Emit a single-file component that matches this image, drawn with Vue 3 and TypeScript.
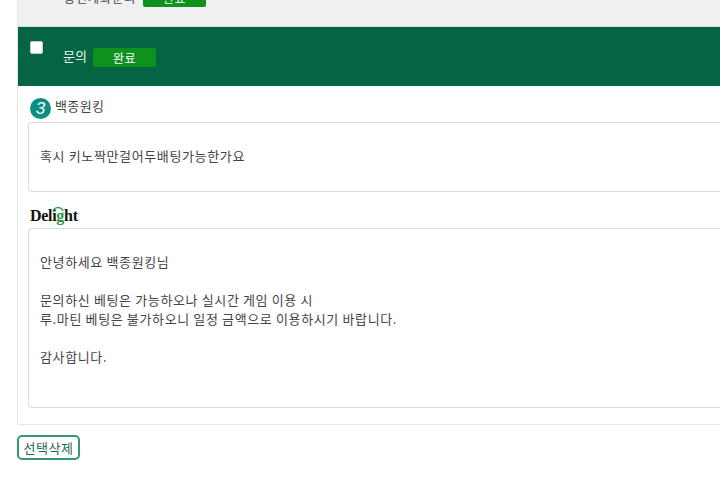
<script setup lang="ts">
const answerLines: string[] = [
  '안녕하세요 백종원킹님',
  '',
  '문의하신 베팅은 가능하오나 실시간 게임 이용 시',
  '루.마틴 베팅은 불가하오니 일정 금액으로 이용하시기 바랍니다.',
  '',
  '감사합니다.',
]
</script>

<template>
  <div class="page">
    <div class="board">
      <div class="row-prev">
        <span class="prev-title">충전계좌문의</span>
        <span class="badge">완료</span>
      </div>
      <div class="row-head">
        <input class="check" type="checkbox" />
        <span class="head-title">문의</span>
        <span class="badge">완료</span>
      </div>
      <div class="body">
        <div class="author">
          <span class="level">3</span>
          <span class="name">백종원킹</span>
        </div>
        <div class="box box-q">혹시 키노짝만걸어두배팅가능한가요</div>
        <div class="brand">
          <span>Deli</span><span class="g">g</span><span>ht</span>
          <svg class="arc" width="12" height="10" viewBox="0 0 12 10">
            <path d="M1 7 A5.2 5.2 0 0 1 11 6" fill="none" stroke="#1f9a3a" stroke-width="1.3" />
          </svg>
        </div>
        <div class="box box-a">
          <div v-for="(line, i) in answerLines" :key="i" class="line">{{ line }}</div>
        </div>
      </div>
    </div>
    <button class="del" type="button">선택삭제</button>
  </div>
</template>

<style scoped>
.page {
  width: 720px;
  height: 480px;
  overflow: hidden;
  font-family: "Noto Sans CJK KR", "Noto Sans", sans-serif;
  color: #444;
  padding-left: 17px;
  box-sizing: border-box;
}
.board {
  width: 740px;
  height: 425px;
  box-sizing: border-box;
  border-left: 1px solid #e8e8e8;
  border-bottom: 1px solid #e8e8e8;
  display: flex;
  flex-direction: column;
}
.row-prev {
  height: 27px;
  flex: none;
  box-sizing: border-box;
  background: #f0f0f0;
  border-bottom: 1px solid #cfe3d8;
  position: relative;
}
.prev-title {
  position: absolute;
  left: 46px;
  top: -11px;
  font-size: 12px;
  letter-spacing: 1px;
  line-height: 18px;
}
.row-prev .badge {
  position: absolute;
  left: 125px;
  top: -12px;
}
.badge {
  display: inline-flex;
  align-items: center;
  justify-content: center;
  width: 63px;
  height: 19px;
  background: #0e921f;
  color: #fff;
  border-radius: 2px;
  font-size: 12px;
  letter-spacing: 0.5px;
}
.row-head {
  height: 59px;
  flex: none;
  background: #056543;
  display: flex;
  align-items: flex-start;
  color: #e8f3ee;
  font-size: 13px;
  box-sizing: border-box;
  padding: 21px 0 0 12px;
}
.check {
  appearance: none;
  width: 13px;
  height: 13px;
  margin: -7px 20px 0 0;
  background: #fff;
  border: 1px solid #ccc;
  border-radius: 2px;
  box-sizing: border-box;
}
.head-title {
  line-height: 16px;
  margin-right: 6px;
}
.body {
  flex: 1;
  padding-left: 10px;
}
.author {
  height: 36px;
  display: flex;
  align-items: flex-start;
  box-sizing: border-box;
  padding-top: 11px;
}
.level {
  width: 21px;
  height: 21px;
  margin-top: 1px;
  border-radius: 50%;
  background: #0a8f82;
  color: #fff;
  font: italic 400 17px/21px "Liberation Sans", sans-serif;
  text-align: center;
  margin-right: 4px;
  margin-left: 2px;
}
.name {
  font-size: 13px;
  letter-spacing: 0.4px;
  line-height: 18px;
}
.box {
  box-sizing: border-box;
  border: 1px solid #dcdcdc;
  border-right: 0;
  border-radius: 4px 0 0 4px;
  background: #fff;
  font-size: 13px;
  letter-spacing: 0.63px;
  line-height: 19px;
  padding-left: 11px;
}
.box-q {
  height: 70px;
  padding-top: 23px;
}
.brand {
  position: relative;
  height: 36px;
  box-sizing: border-box;
  padding: 15px 0 0 2px;
  font: 700 16px/18px "Liberation Serif", serif;
  letter-spacing: -0.3px;
  color: #111;
}
.g {
  color: #1f9a3a;
}
.arc {
  position: absolute;
  left: 24px;
  top: 13px;
}
.box-a {
  height: 180px;
  padding-top: 23px;
}
.line {
  height: 19px;
}
.del {
  display: block;
  width: 63px;
  height: 25px;
  margin-top: 10px;
  padding: 0;
  background: #fff;
  border: 2px solid #3a9578;
  border-radius: 5px;
  font-family: inherit;
  font-size: 13px;
  letter-spacing: 0.5px;
  color: #1f6b50;
}
</style>
